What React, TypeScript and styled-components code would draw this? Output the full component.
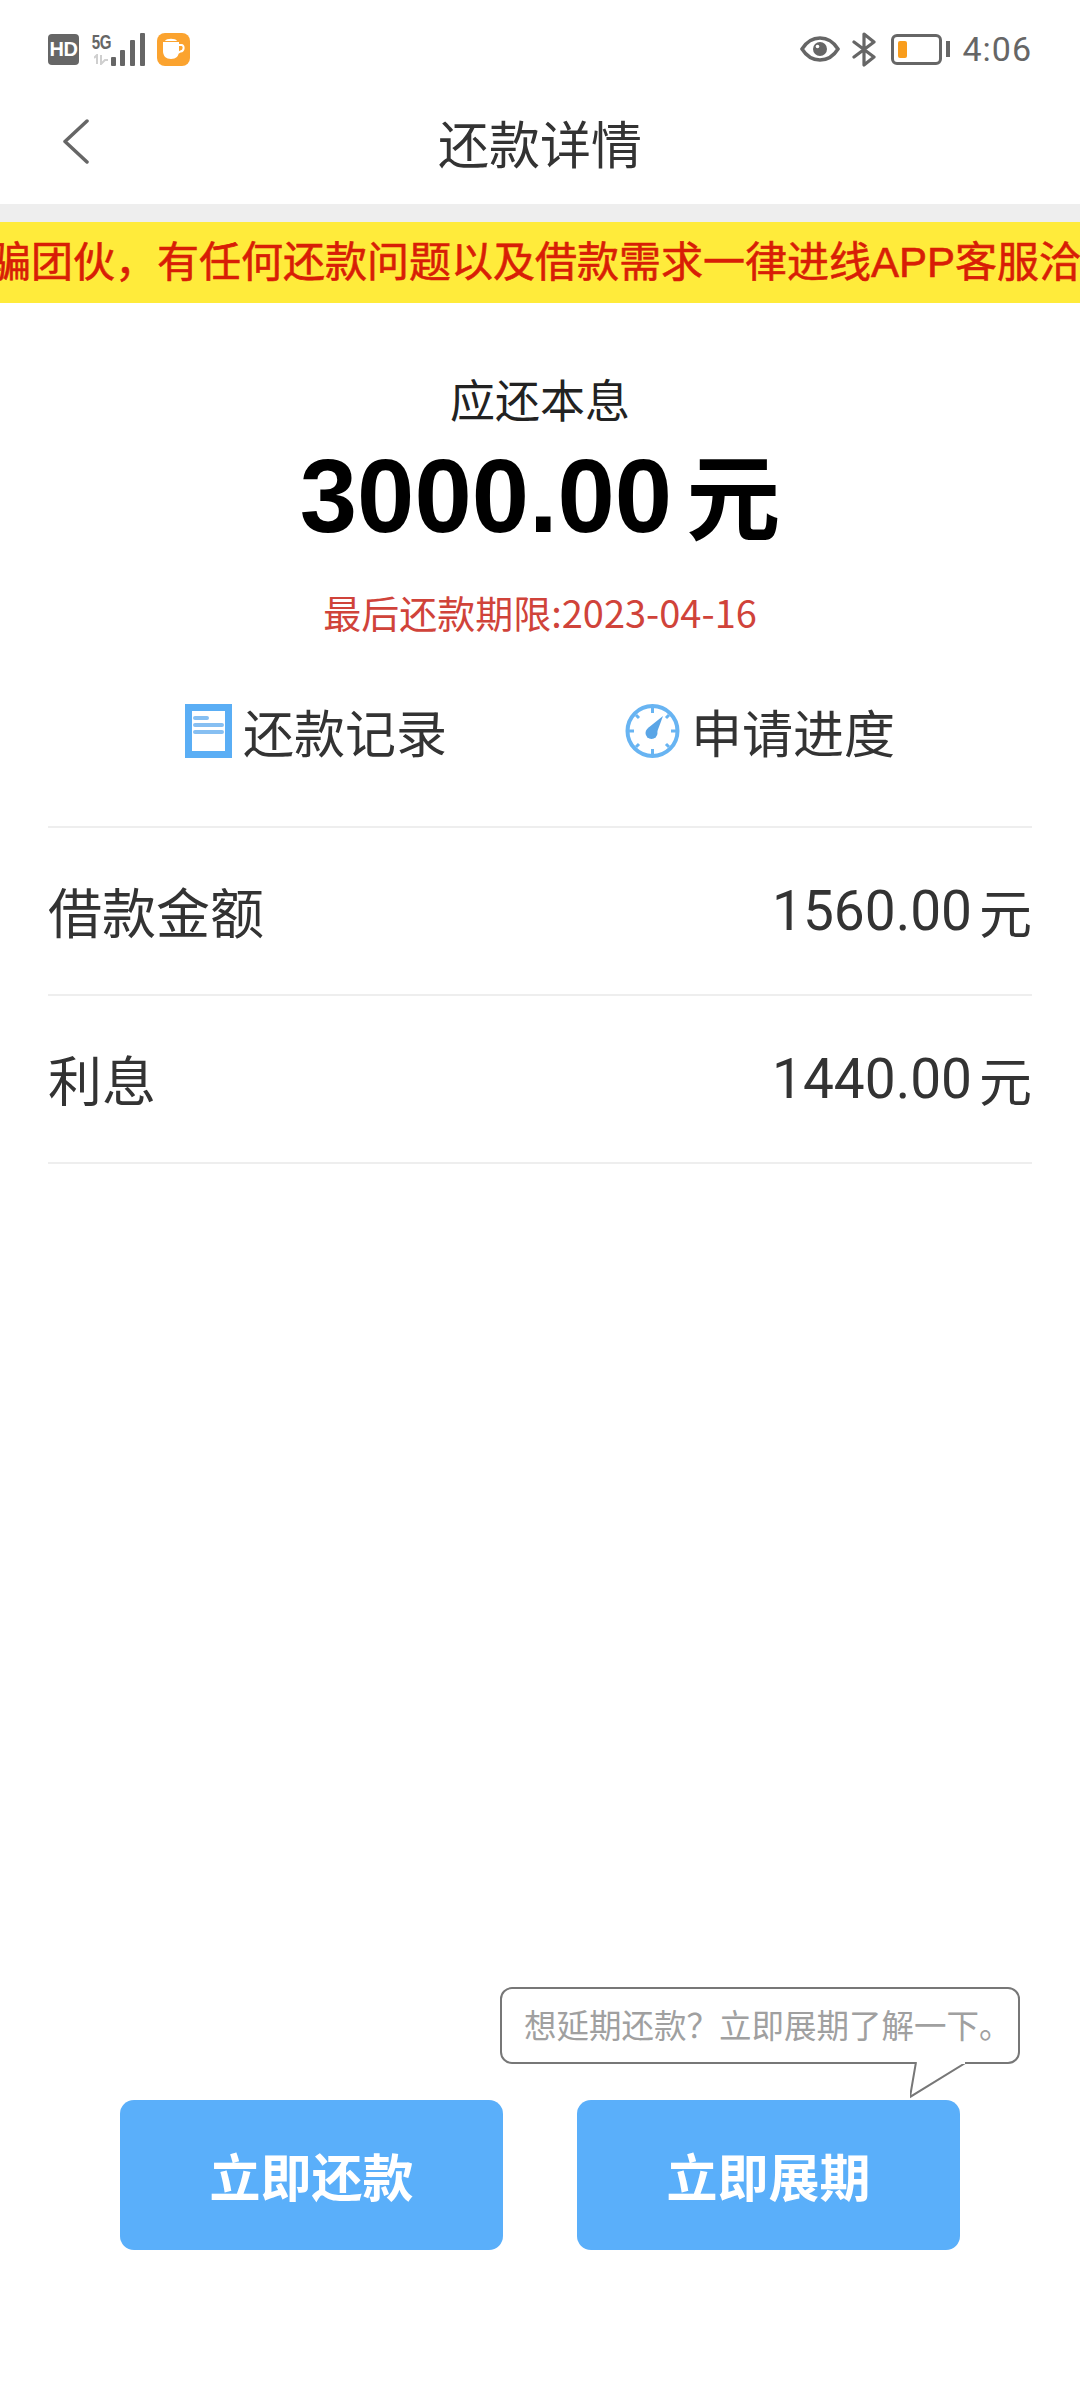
import styled, { createGlobalStyle } from "styled-components";

const CJK = `"Noto Sans CJK SC", "Noto Sans", sans-serif`;

const GlobalStyle = createGlobalStyle`
  html, body { margin: 0; padding: 0; background: #fff; }
  * { box-sizing: border-box; }
`;

export default function App() {
  return (
    <Page>
      <GlobalStyle />
      <StatusBar>
        <StatusGroup>
          <HdBadge>HD</HdBadge>
          <Network>
            <NetworkLabel>5G</NetworkLabel>
            <svg width="14" height="11" viewBox="0 0 14 11">
              <path d="M3 10V1L0 4M7 1v9l4-4h3" fill="none" stroke="#cfcfcf" strokeWidth="2" />
            </svg>
          </Network>
          <SignalIcon width="34" height="33" viewBox="0 0 34 33">
            <rect x="0" y="24" width="5" height="9" rx="1" />
            <rect x="9" y="17" width="5" height="16" rx="1" />
            <rect x="19" y="7" width="5" height="26" rx="1" />
            <rect x="29" y="0" width="5" height="33" rx="1" />
          </SignalIcon>
          <CupBadge>
            <svg width="24" height="22" viewBox="0 0 24 22">
              <path d="M1 4h16v9c0 5-3 8-8 8s-8-3-8-8z" fill="#fff" />
              <path d="M17 7h2.500c3 0 3 6-1 6.500L16 15" fill="none" stroke="#fff" strokeWidth="2" />
              <path d="M3 3c1-3 11-3 12 0z" fill="#fff" />
            </svg>
          </CupBadge>
        </StatusGroup>
        <StatusGroup>
          <svg width="40" height="26" viewBox="0 0 40 26">
            <path d="M2 13C7 5 13 2 20 2s13 3 18 11c-5 8-11 11-18 11S7 21 2 13z" fill="none" stroke="#666" strokeWidth="3.500" />
            <circle cx="20" cy="13" r="7" fill="#666" />
            <circle cx="17.500" cy="10.500" r="1.800" fill="#fff" />
          </svg>
          <BluetoothIcon width="24" height="35" viewBox="0 0 24 35">
            <path d="M2 10l20 15-10 8V2l10 8L2 25" fill="none" stroke="#666" strokeWidth="3.200" strokeLinejoin="round" strokeLinecap="round" />
          </BluetoothIcon>
          <Battery>
            <BatteryBody>
              <BatteryLevel />
            </BatteryBody>
            <BatteryNub />
          </Battery>
          <Clock>4:06</Clock>
        </StatusGroup>
      </StatusBar>

      <NavBar>
        <BackIcon width="28" height="45" viewBox="0 0 28 45">
          <path d="M25 2L3 22.500 25 43" fill="none" stroke="#666" strokeWidth="3.500" strokeLinecap="round" strokeLinejoin="round" />
        </BackIcon>
        <NavTitle>还款详情</NavTitle>
      </NavBar>

      <NoticeBar>
        <NoticeText>骗团伙，有任何还款问题以及借款需求一律进线APP客服洽</NoticeText>
      </NoticeBar>

      <Summary>
        <SummaryLabel>应还本息</SummaryLabel>
        <Amount>
          3000.00<AmountUnit>元</AmountUnit>
        </Amount>
        <Deadline>最后还款期限:2023-04-16</Deadline>
      </Summary>

      <LinkRow>
        <LinkItem>
          <svg width="47" height="54" viewBox="0 0 47 54">
            <rect x="3.500" y="3.500" width="40" height="47" fill="#fff" stroke="#5aaef5" strokeWidth="7" />
            <path d="M10 14h12M10 21h27M10 28h27" stroke="#86bff2" strokeWidth="4" strokeLinecap="round" />
          </svg>
          还款记录
        </LinkItem>
        <LinkItem>
          <svg width="55" height="54" viewBox="0 0 55 54">
            <circle cx="27.500" cy="27" r="25" fill="#fff" stroke="#68b4f2" strokeWidth="4" />
            <path d="M27.500 3v6M27.500 45v6M4 27h5M46 27h5M11 11l3 3M44 11l-3 3M11 43l3-3M44 43l-3-3" stroke="#68b4f2" strokeWidth="3" />
            <path d="M23 24L38 12 31 31z" fill="#5aa5e6" />
            <circle cx="26.500" cy="29" r="6" fill="#5aa5e6" />
          </svg>
          申请进度
        </LinkItem>
      </LinkRow>

      <DetailList>
        <DetailRow>
          <DetailName>借款金额</DetailName>
          <DetailValue>
            1560.00<DetailUnit>元</DetailUnit>
          </DetailValue>
        </DetailRow>
        <DetailRow>
          <DetailName>利息</DetailName>
          <DetailValue>
            1440.00<DetailUnit>元</DetailUnit>
          </DetailValue>
        </DetailRow>
      </DetailList>

      <Footer>
        <ActionButton>立即还款</ActionButton>
        <ActionButton>立即展期</ActionButton>
        <Tip>
          想延期还款？立即展期了解一下。
          <TipTail width="60" height="38" viewBox="0 0 60 38">
            <path d="M6 0L0 35 57 0" fill="#fff" stroke="#777" strokeWidth="2" />
            <rect x="7" y="0" width="48" height="2" fill="#fff" />
          </TipTail>
        </Tip>
      </Footer>
    </Page>
  );
}

const Page = styled.main`
  display: flex;
  flex-direction: column;
  width: 1080px;
  height: 2400px;
  overflow: hidden;
  background: #fff;
  font-family: ${CJK};
`;

const StatusBar = styled.div`
  display: flex;
  justify-content: space-between;
  align-items: center;
  height: 98px;
  padding: 0 48px;
`;

const StatusGroup = styled.div`
  display: flex;
  align-items: center;
  gap: 12px;
`;

const HdBadge = styled.span`
  width: 31px;
  height: 31px;
  border-radius: 4px;
  background: #666;
  color: #fff;
  font: 700 20px/31px "Liberation Sans", sans-serif;
  letter-spacing: -0.5px;
  text-align: center;
`;

const Network = styled.div`
  display: flex;
  flex-direction: column;
  align-items: center;
  width: 20px;
  height: 33px;
  margin-right: -12px;
`;

const NetworkLabel = styled.span`
  height: 21px;
  font: 700 21px/18px "Liberation Sans", sans-serif;
  color: #666;
  transform: scaleX(0.72);
  letter-spacing: -0.5px;
`;

const SignalIcon = styled.svg`
  fill: #666;
`;

const CupBadge = styled.div`
  display: flex;
  align-items: center;
  justify-content: center;
  width: 33px;
  height: 33px;
  border-radius: 8px;
  background: #fba32f;
`;

const BluetoothIcon = styled.svg`
  margin-right: 3px;
`;

const Battery = styled.div`
  display: flex;
  align-items: center;
  gap: 4px;
`;

const BatteryBody = styled.div`
  width: 51px;
  height: 31px;
  padding: 4px;
  border: 3px solid #666;
  border-radius: 6px;
`;

const BatteryLevel = styled.div`
  width: 9px;
  height: 100%;
  border-radius: 2px;
  background: #f99d1c;
`;

const BatteryNub = styled.div`
  width: 4px;
  height: 16px;
  background: #666;
`;

const Clock = styled.span`
  font: 400 34px/1 Roboto, sans-serif;
  color: #666;
  letter-spacing: 1px;
`;

const NavBar = styled.header`
  position: relative;
  display: flex;
  justify-content: center;
  align-items: center;
  height: 104px;
  margin-top: -8px;
`;

const BackIcon = styled.svg`
  position: absolute;
  left: 62px;
  top: 29px;
`;

const NavTitle = styled.h1`
  margin: 0;
  font-size: 51px;
  font-weight: 400;
  color: #333;
`;

const NoticeBar = styled.div`
  display: flex;
  justify-content: flex-end;
  align-items: center;
  height: 99px;
  margin-top: 10px;
  border-top: 18px solid #eeeeee;
  overflow: hidden;
  background: #ffeb3b;
  background-clip: padding-box;
`;

const NoticeText = styled.span`
  flex: none;
  margin-right: -1px;
  font-family: "Liberation Sans", ${CJK};
  font-size: 42px;
  line-height: 78px;
  font-weight: 400;
  color: #d81e06;
  white-space: nowrap;
  -webkit-text-stroke: 0.6px #d81e06;
`;

const Summary = styled.section`
  display: flex;
  flex-direction: column;
  align-items: center;
  padding-top: 63px;
`;

const SummaryLabel = styled.div`
  font-size: 45px;
  line-height: 66px;
  color: #222;
`;

const Amount = styled.div`
  display: flex;
  align-items: center;
  gap: 14px;
  height: 130px;
  font: 700 103px/130px "Liberation Sans", sans-serif;
  color: #000;
`;

const AmountUnit = styled.span`
  padding-bottom: 10px;
  font-family: ${CJK};
  font-size: 94px;
  line-height: 1;
  font-weight: 700;
`;

const Deadline = styled.div`
  margin-top: 23px;
  font-size: 38px;
  line-height: 54px;
  color: #d0433a;
`;

const LinkRow = styled.nav`
  display: flex;
  justify-content: center;
  align-items: center;
  gap: 178px;
  height: 91px;
  margin-top: 46px;
  margin-bottom: 1px;
`;

const LinkItem = styled.a`
  display: flex;
  align-items: center;
  gap: 11px;
  font-size: 51px;
  color: #333;
`;

const DetailList = styled.section`
  margin: 49px 48px 0;
  border-top: 2px solid #eee;
`;

const DetailRow = styled.div`
  display: flex;
  justify-content: space-between;
  align-items: center;
  height: 168px;
  border-bottom: 2px solid #eee;
`;

const DetailName = styled.span`
  padding-bottom: 2px;
  font-size: 54px;
  color: #333;
`;

const DetailValue = styled.span`
  display: flex;
  align-items: center;
  gap: 7px;
  font: 400 55px/1 Roboto, sans-serif;
  color: #333;
`;

const DetailUnit = styled.span`
  font-family: ${CJK};
  font-size: 53px;
`;

const Footer = styled.footer`
  position: relative;
  display: flex;
  justify-content: center;
  gap: 74px;
  margin-top: auto;
  padding-bottom: 150px;
`;

const ActionButton = styled.button`
  width: 383px;
  height: 150px;
  border: 0;
  border-radius: 14px;
  background: #5aaffa;
  color: #fff;
  font-family: ${CJK};
  font-size: 51px;
  font-weight: 700;
`;

const Tip = styled.div`
  position: absolute;
  left: 500px;
  top: -113px;
  width: 520px;
  height: 77px;
  padding-left: 22px;
  border: 2px solid #777;
  border-radius: 12px;
  background: #fff;
  color: #a0a0a0;
  font-size: 32.5px;
  line-height: 69px;
  white-space: nowrap;
`;

const TipTail = styled.svg`
  position: absolute;
  left: 408px;
  top: 73px;
`;
